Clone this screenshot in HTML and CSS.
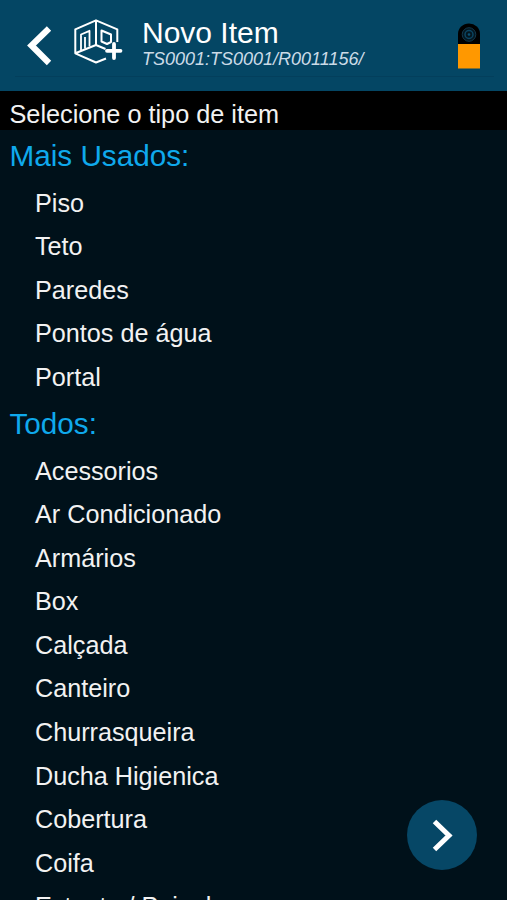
FILE: index.html
```html
<!DOCTYPE html>
<html lang="pt-BR">
<head>
<meta charset="utf-8">
<title>Novo Item</title>
<link rel="stylesheet" href="styles.css">
</head>
<body>
<div class="app">
  <header class="header">
    <svg class="back" viewBox="0 0 28 42" width="28" height="42"><path d="M24 3.500 6.500 20.500 24 38" fill="none" stroke="#fff" stroke-width="6.200"/></svg>
    <svg class="room" viewBox="0 0 50 48" width="50" height="48" fill="none" stroke="#fff" stroke-width="2" stroke-linejoin="round">
      <path d="M33 40.500 23 44.500 2.300 35.300V11.300L23 2.300 44.300 11.300V24M23 2.300V27L2.300 35.300M23 27 32.500 31"/>
      <path d="M8 32V16.500L16.500 12.800V28.500M12 30.500V19" stroke-width="1.800"/>
      <path d="M28.500 12.500 38 16.500V24L34 26 28.500 23.500Z"/>
      <path d="M41 26V40M34 32.800H47.500" stroke-width="3.800" stroke-linecap="round"/>
    </svg>
    <div class="titles">
      <h1 class="title">Novo Item</h1>
      <p class="path">TS0001:TS0001/R0011156/</p>
    </div>
    <svg class="lock" viewBox="0 0 22 46" width="22" height="46">
      <path d="M0 21V11A11 10.500 0 0 1 22 11V21Z" fill="#000"/>
      <circle cx="11" cy="11.500" r="6.800" fill="#04161f" stroke="#12384c"/>
      <circle cx="11" cy="11.500" r="4" fill="none" stroke="#0b4562" stroke-width="1.500"/>
      <circle cx="11" cy="11.500" r="1.300" fill="#0b5275"/>
      <path d="M0 21H22V45.500H0Z" fill="#ff9800"/>
    </svg>
  </header>
  <div class="prompt">Selecione o tipo de item</div>
  <main class="list">
    <h2 class="heading">Mais Usados:</h2>
    <ul class="items">
      <li>Piso</li><li>Teto</li><li>Paredes</li><li>Pontos de água</li><li>Portal</li>
    </ul>
    <h2 class="heading">Todos:</h2>
    <ul class="items">
      <li>Acessorios</li><li>Ar Condicionado</li><li>Armários</li><li>Box</li><li>Calçada</li><li>Canteiro</li><li>Churrasqueira</li><li>Ducha Higienica</li><li>Cobertura</li><li>Coifa</li><li>Estante / Painel</li>
    </ul>
  </main>
  <button class="next" aria-label="Avançar">
    <svg viewBox="0 0 70 70" width="70" height="70"><path d="M27.500 21.500 42 35.500 27.500 49.500" fill="none" stroke="#fff" stroke-width="5"/></svg>
  </button>
</div>
</body>
</html>
```
FILE: styles.css
```css
* { box-sizing: border-box; margin: 0; padding: 0; }
body { background: #00111a; font-family: "Liberation Sans", Arial, sans-serif; overflow: hidden; }
.app { position: relative; height: 900px; overflow: hidden; color: #f2f2f2; }
.header {
  display: flex;
  align-items: flex-start;
  height: 91px;
  padding: 0 27px 0 25px;
  background: linear-gradient(#033f5c, #033f5c) 15px 76px / 479px 1px no-repeat, #044664;
}
.back { margin-top: 25px; }
.room { margin: 18px 0 0 20px; }
.titles { flex: 1; padding: 15px 0 0 19px; white-space: nowrap; }
.title { font-size: 30px; line-height: 35px; font-weight: 400; color: #fff; }
.path { font-size: 18px; line-height: 18px; font-style: italic; color: #cbdbe7; }
.lock { margin-top: 23px; }
.prompt { height: 39px; padding-left: 9.500px; background: #000; font-size: 25.250px; line-height: 46px; }
.heading { height: 50.500px; padding-left: 9.500px; font-size: 29.700px; line-height: 51px; font-weight: 400; color: #0fa9ec; }
.items { list-style: none; padding-left: 35px; }
.items li { height: 43.550px; font-size: 25.200px; line-height: 45.400px; }
.next {
  position: absolute;
  left: 407px;
  top: 800px;
  width: 70px;
  height: 70px;
  border: 0;
  border-radius: 50%;
  background: #064766;
}
.next svg { display: block; }
```
